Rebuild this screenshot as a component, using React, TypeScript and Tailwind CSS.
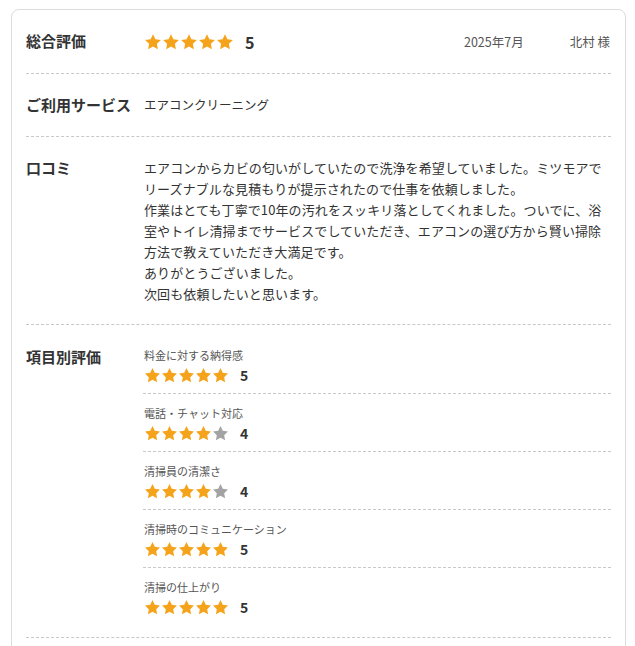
import React from 'react';

const font = { fontFamily: '"Noto Sans CJK JP", "Noto Sans", sans-serif' };

const Star = ({ filled, size }: { filled: boolean; size: number }) => (
  <svg width={size} height={size} viewBox="0 0 24 24" className={filled ? 'text-[#f5a31a]' : 'text-[#a3a3a3]'}>
    <path
      fill="currentColor"
      d="M12 1.5l3.2 6.7 7.3 1-5.3 5.1 1.3 7.3L12 18.1l-6.5 3.5 1.3-7.3L1.5 9.2l7.3-1L12 1.5z"
    />
  </svg>
);

const Stars = ({ score, size }: { score: number; size: number }) => (
  <div className="flex items-center">
    {[1, 2, 3, 4, 5].map((i) => (
      <Star key={i} filled={i <= score} size={size} />
    ))}
  </div>
);

const items = [
  { label: '料金に対する納得感', score: 5 },
  { label: '電話・チャット対応', score: 4 },
  { label: '清掃員の清潔さ', score: 4 },
  { label: '清掃時のコミュニケーション', score: 5 },
  { label: '清掃の仕上がり', score: 5 },
];

const reviewLines = [
  'エアコンからカビの匂いがしていたので洗浄を希望していました。ミツモアで',
  'リーズナブルな見積もりが提示されたので仕事を依頼しました。',
  '作業はとても丁寧で10年の汚れをスッキリ落としてくれました。ついでに、浴',
  '室やトイレ清掃までサービスでしていただき、エアコンの選び方から賢い掃除',
  '方法で教えていただき大満足です。',
  'ありがとうございました。',
  '次回も依頼したいと思います。',
];

export default function App() {
  return (
    <div className="w-[635px] h-[646px] overflow-hidden bg-white pt-[9px] pl-[11px] pr-[9px] text-[#333]" style={font}>
      <div className="rounded-[8px] border border-[#dcdcdc] px-[14px] h-[700px]">
        {/* 総合評価 */}
        <div className="flex items-center pt-[22px] pb-[21px] border-b border-dashed border-[#c8c8c8]">
          <div className="w-[118px] text-[15px] font-bold leading-[20px] -mt-[3px]">総合評価</div>
          <div className="flex items-center gap-[11px]">
            <Stars score={5} size={18} />
            <span className="text-[16px] font-bold leading-[20px]">5</span>
          </div>
          <div className="ml-auto flex items-center text-[12.5px] text-[#555] leading-[20px]">
            <span>2025年7月</span>
            <span className="ml-[46px] pr-[1px]">北村 様</span>
          </div>
        </div>

        {/* ご利用サービス */}
        <div className="flex items-center pt-[21px] pb-[21px] border-b border-dashed border-[#c8c8c8]">
          <div className="w-[118px] text-[15px] font-bold leading-[20px]">ご利用サービス</div>
          <div className="text-[12.5px] leading-[20px]">エアコンクリーニング</div>
        </div>

        {/* 口コミ */}
        <div className="flex pt-[20px] pb-[20px] border-b border-dashed border-[#c8c8c8]">
          <div className="w-[118px] shrink-0 text-[15px] font-bold leading-[21px]">口コミ</div>
          <p className="w-[475px] text-[13px] leading-[21px] tracking-[0.1px] whitespace-nowrap">
            {reviewLines.map((line) => (
              <span key={line} className="block">
                {line}
              </span>
            ))}
          </p>
        </div>

        {/* 項目別評価 */}
        <div className="flex pt-[22px] pb-[18px] border-b border-dashed border-[#c8c8c8]">
          <div className="w-[118px] shrink-0 text-[15px] font-bold leading-[20px]">項目別評価</div>
          <div className="flex-1 -ml-[1px]">
            {items.map((item, idx) => (
              <div
                key={item.label}
                className={
                  idx < items.length - 1
                    ? 'pb-[6px] mb-[11px] border-b border-dashed border-[#c8c8c8]'
                    : ''
                }
              >
                <div className="pl-[1px] text-[11px] leading-[16px] text-[#555]">{item.label}</div>
                <div className="flex items-center h-[24px] gap-[11px] pl-[1px]">
                  <Stars score={item.score} size={17} />
                  <span className="text-[14px] font-bold leading-[20px]">{item.score}</span>
                </div>
              </div>
            ))}
          </div>
        </div>
      </div>
    </div>
  );
}
